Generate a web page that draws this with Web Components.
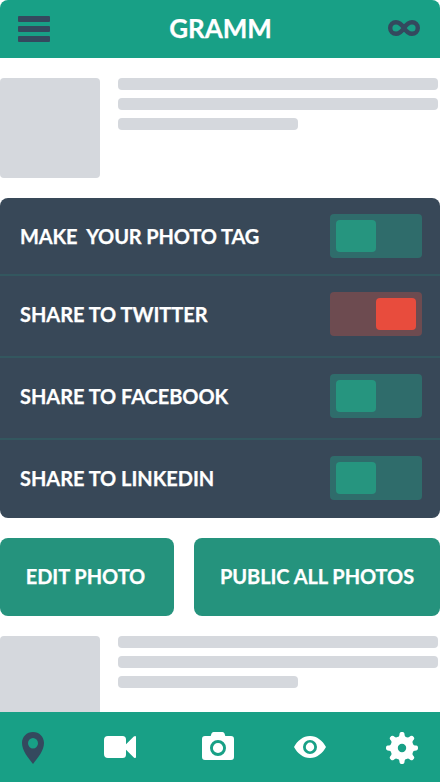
<!DOCTYPE html>
<html lang="en">
<head>
<meta charset="utf-8">
<title>Gramm</title>
<style>
html,body{margin:0;height:100%;overflow:hidden;background:#fff}
body{font-family:Lato,"Liberation Sans",sans-serif;font-weight:700;color:#fff;-webkit-text-stroke:.25px currentColor}
</style>
</head>
<body>
<gramm-app></gramm-app>
<script>
const define = (name, html, setup) => customElements.define(name, class extends HTMLElement {
  constructor() {
    super();
    this.attachShadow({ mode: 'open' }).innerHTML = html;
  }
  connectedCallback() { if (setup) setup(this, this.shadowRoot); }
});

const icons = {
  menu: [32, 26, '<rect width="32" height="6" rx="1"/><rect y="10" width="32" height="6" rx="1"/><rect y="20" width="32" height="6" rx="1"/>'],
  infinity: [32, 16, '<path fill="none" stroke="currentColor" stroke-width="4.400" d="M16 8C14.200 5.200 11.800 2.200 8 2.200a5.800 5.800 0 0 0 0 11.600c3.800 0 6.200-3 8-5.800s4.200-5.800 8-5.800a5.800 5.800 0 0 1 0 11.600c-3.800 0-6.200-3-8-5.800Z"/>'],
  pin: [22, 32, '<path fill-rule="evenodd" d="M11 0C4.700 0 0 4.800 0 11c0 7.500 6 14.500 11 21 5-6.500 11-13.500 11-21C22 4.800 17.300 0 11 0Zm0 6a5 5.300 0 1 1 0 10.600A5 5.300 0 0 1 11 6Z"/>'],
  video: [32, 22, '<path d="M4 0H18.500Q22 0 22 3.500V8.200L29.800.6Q32-.8 32 1.300V20.700Q32 22.800 29.800 21.400L22 13.800V18.500Q22 22 18.500 22H4Q0 22 0 18V4Q0 0 4 0Z"/>'],
  camera: [32, 28, '<path fill-rule="evenodd" d="M11.500 0h9Q22 0 22.500 1.500L23.300 4H29q3 0 3 3v18q0 3-3 3H3q-3 0-3-3V7q0-3 3-3H8.700l.8-2.500Q10 0 11.500 0ZM16 8a8 8 0 1 0 0 16 8 8 0 0 0 0-16Zm0 2.900a5.100 5.100 0 1 1 0 10.200 5.100 5.100 0 0 1 0-10.200Z"/>'],
  eye: [32, 22, '<path fill-rule="evenodd" d="M16 0C9 0 3.500 4.700 0 11c3.500 6.300 9 11 16 11s12.500-4.700 16-11C28.500 4.700 23 0 16 0Zm0 4a7 7 0 1 1 0 14 7 7 0 0 1 0-14Zm0 2.600a4.200 4.400 0 1 0 0 8.800 4.200 4.400 0 0 0 0-8.800Z"/>'],
  gear: [32, 32, (() => {
    let d = '';
    for (let i = 0; i < 8; i++) {
      const p = (r, deg) => {
        const a = (i * 45 + deg - 90) * Math.PI / 180;
        return (16 + r * Math.cos(a)).toFixed(2) + ' ' + (16 + r * Math.sin(a)).toFixed(2);
      };
      d += (i ? 'Q' + p(11.6, -22.5) + ' ' : 'M') + p(12, -15) + 'Q' + p(12.8, -11.5) + ' ' + p(14.6, -9.5) + 'Q' + p(16, -8) + ' ' + p(16, -3) + 'L' + p(16, 3) + 'Q' + p(16, 8) + ' ' + p(14.6, 9.5) + 'Q' + p(12.8, 11.5) + ' ' + p(12, 15);
    }
    return '<path fill-rule="evenodd" d="' + d + 'ZM16 11.800a4.200 4.200 0 1 0 0 8.400 4.200 4.200 0 0 0 0-8.400Z"/>';
  })()]
};

define('gramm-icon', '<style>:host{display:block;line-height:0}svg{display:block;fill:currentColor}</style><span></span>', (el, root) => {
  const [w, h, body] = icons[el.getAttribute('name')];
  root.querySelector('span').innerHTML = `<svg width="${w}" height="${h}" viewBox="0 0 ${w} ${h}">${body}</svg>`;
});

define('gramm-header', `<style>
:host{display:flex;flex:none;box-sizing:border-box;height:58px;padding:0 20px 2px 18px;align-items:center;justify-content:space-between;background:#18a086;border-radius:8px 8px 0 0}
gramm-icon{color:#34495e}
gramm-icon[name=menu]{padding-top:2px}
h1{margin:0;font:inherit;font-size:26px;line-height:30px;letter-spacing:-.1px;padding-left:3px}
</style><gramm-icon name="menu"></gramm-icon><h1><slot></slot></h1><gramm-icon name="infinity"></gramm-icon>`);

define('gramm-post', `<style>
:host{display:flex;flex:none;gap:18px;height:100px}
.thumb{width:100px;border-radius:4px;background:#d5d8dd}
.lines{display:flex;flex-direction:column;gap:8px;width:320px}
i{height:12px;border-radius:4px;background:#d5d8dd}
i:last-child{width:180px}
</style><div class="thumb"></div><div class="lines"><i></i><i></i><i></i></div>`);

define('gramm-toggle', `<style>
:host{display:flex;box-sizing:border-box;width:92px;height:44px;padding:6px;border-radius:4px;background:#2f6c6b}
:host([off]){justify-content:flex-end;background:#6d4b50}
i{width:40px;border-radius:4px;background:#26957f}
:host([off]) i{background:#e84c3d}
</style><i></i>`);

define('gramm-setting', `<style>
:host{display:flex;box-sizing:border-box;height:82px;padding:16px 18px 0 20px;justify-content:space-between;align-items:flex-start;border-bottom:2px solid #33575f}
:host(:first-child){height:78px}
:host(:last-child){height:78px;border:0}
span{font-size:20px;line-height:44px;white-space:pre;letter-spacing:-.04px}
:host(:first-child) span{letter-spacing:-.13px}
</style><span><slot></slot></span><gramm-toggle></gramm-toggle>`, (el, root) => {
  root.querySelector('gramm-toggle').toggleAttribute('off', el.hasAttribute('off'));
});

define('gramm-settings', `<style>:host{display:flex;flex:none;flex-direction:column;background:#384858;border-radius:8px}</style><slot></slot>`);

define('gramm-button', `<style>
:host{display:flex;box-sizing:border-box;height:78px;align-items:center;justify-content:center;background:#25937d;border-radius:8px}
button{all:unset;font-size:20px;line-height:24px;letter-spacing:-.06px;white-space:nowrap;padding:0 3px 2px 0}
:host(:last-child) button{padding-right:0}
</style><button><slot></slot></button>`);

define('gramm-tabs', `<style>
:host{display:flex;flex:none;box-sizing:border-box;height:70px;padding:20px 22px 0;align-items:flex-start;justify-content:space-between;background:#18a086}
[name=pin]{color:#34495e}
[name=video]{margin-right:6px}
[name=video],[name=eye]{padding-top:4px}
</style><gramm-icon name="pin"></gramm-icon><gramm-icon name="video"></gramm-icon><gramm-icon name="camera"></gramm-icon><gramm-icon name="eye"></gramm-icon><gramm-icon name="gear"></gramm-icon>`);

define('gramm-app', `<style>
:host{display:flex;flex-direction:column;width:440px;height:782px;overflow:hidden}
main{flex:1;min-height:0;overflow:hidden;display:flex;flex-direction:column;gap:20px;padding-top:20px}
.actions{display:grid;grid-template-columns:174px 246px;gap:20px}
</style>
<gramm-header>GRAMM</gramm-header>
<main>
<gramm-post></gramm-post>
<gramm-settings>
<gramm-setting>MAKE  YOUR PHOTO TAG</gramm-setting>
<gramm-setting off>SHARE TO TWITTER</gramm-setting>
<gramm-setting>SHARE TO FACEBOOK</gramm-setting>
<gramm-setting>SHARE TO LINKEDIN</gramm-setting>
</gramm-settings>
<div class="actions"><gramm-button>EDIT PHOTO</gramm-button><gramm-button>PUBLIC ALL PHOTOS</gramm-button></div>
<gramm-post></gramm-post>
</main>
<gramm-tabs></gramm-tabs>`);
</script>
</body>
</html>
